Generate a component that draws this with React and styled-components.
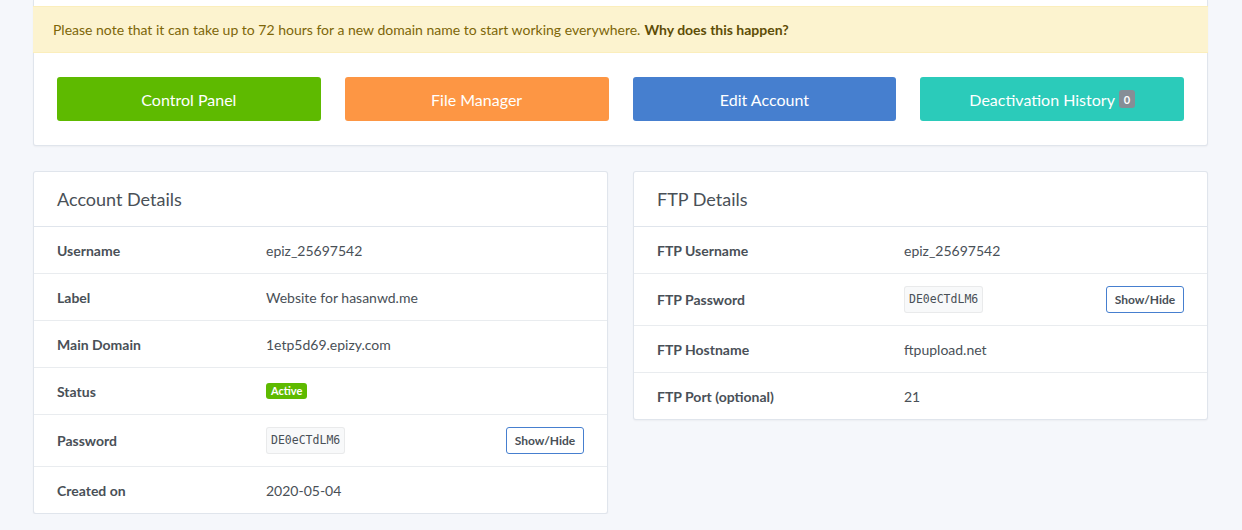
import React from 'react';
import styled, { createGlobalStyle } from 'styled-components';

const GlobalStyle = createGlobalStyle`
  * { box-sizing: border-box; }
  body {
    margin: 0;
    background: #f5f7fb;
    font-family: Lato, "Open Sans", sans-serif;
    font-size: 14px;
    color: #495057;
  }
`;

const Page = styled.div`
  width: 1208px;
  padding-left: 33px;
  display: flex;
  flex-direction: column;
  gap: 25px;
`;

const Card = styled.div`
  background: #fff;
  border: 1px solid rgba(0, 40, 100, 0.12);
  border-radius: 3px;
  box-shadow: 0 1px 2px rgba(0, 0, 0, 0.04);
`;

const TopCard = styled(Card)`
  border-top: none;
  border-radius: 0 0 3px 3px;
`;

const Cutoff = styled.div`
  height: 6px;
`;

const Alert = styled.div`
  background: #fcf3cf;
  border-top: 1px solid #fbeebc;
  border-bottom: 1px solid #fbeebc;
  color: #7d6608;
  padding: 0 20px;
  height: 47px;
  display: flex;
  align-items: center;
  margin: 0 -1px;
  font-size: 14px;
`;

const AlertLink = styled.b`
  color: #5e4d06;
  font-weight: 700;
  margin-left: 4px;
`;

const ButtonRow = styled.div`
  display: grid;
  grid-template-columns: repeat(4, 1fr);
  gap: 24px;
  padding: 24px 23px;
`;

const BigButton = styled.div`
  height: 44px;
  border-radius: 3px;
  background: ${p => p.$bg};
  color: #fff;
  font-size: 16px;
  display: flex;
  align-items: center;
  justify-content: center;
`;

const CountBadge = styled.span`
  background: #868e96;
  color: #fff;
  font-size: 11px;
  font-weight: 700;
  width: 16px;
  height: 18px;
  border-radius: 3px;
  display: inline-flex;
  align-items: center;
  justify-content: center;
  margin-left: 4px;
`;

const Columns = styled.div`
  display: grid;
  grid-template-columns: 1fr 1fr;
  gap: 25px;
  align-items: start;
`;

const CardHeader = styled.div`
  height: 55px;
  padding: 0 23px;
  display: flex;
  align-items: center;
  font-size: 18px;
  font-weight: 400;
  color: #495057;
  border-bottom: 1px solid rgba(0, 40, 100, 0.12);
`;

const Row = styled.div`
  display: grid;
  grid-template-columns: ${p => p.$labelWidth}px 1fr auto;
  align-items: center;
  min-height: 47px;
  padding: 12px 23px;
  border-top: 1px solid #e9ecef;
  &:first-child {
    border-top: none;
    min-height: 46px;
  }
`;

const Label = styled.div`
  font-weight: 700;
`;

const Value = styled.div`
  display: flex;
  align-items: center;
`;

const StatusBadge = styled.span`
  display: inline-block;
  background: #5eba00;
  color: #fff;
  font-size: 11px;
  font-weight: 700;
  padding: 2px 5px;
  border-radius: 3px;
  line-height: 12px;
`;

const Code = styled.span`
  display: inline-block;
  background: #f8f9fa;
  border: 1px solid rgba(0, 0, 0, 0.06);
  border-radius: 3px;
  padding: 0 4px;
  height: 27px;
  line-height: 25px;
  font-family: "DejaVu Sans Mono", "Liberation Mono", monospace;
  font-size: 11.5px;
  color: #495057;
`;

const ToggleButton = styled.button`
  height: 27px;
  width: 78px;
  padding: 0;
  background: #fff;
  border: 1px solid #467fcf;
  border-radius: 3px;
  font-family: inherit;
  font-size: 12px;
  font-weight: 700;
  color: #495057;
`;

const accountRows = [
  { label: 'Username', value: 'epiz_25697542' },
  { label: 'Label', value: 'Website for hasanwd.me' },
  { label: 'Main Domain', value: '1etp5d69.epizy.com' },
  { label: 'Status', badge: 'Active' },
  { label: 'Password', code: 'DE0eCTdLM6' },
  { label: 'Created on', value: '2020-05-04' },
];

const ftpRows = [
  { label: 'FTP Username', value: 'epiz_25697542' },
  { label: 'FTP Password', code: 'DE0eCTdLM6' },
  { label: 'FTP Hostname', value: 'ftpupload.net' },
  { label: 'FTP Port (optional)', value: '21' },
];

function DetailsCard({ title, rows, labelWidth }) {
  return (
    <Card>
      <CardHeader>{title}</CardHeader>
      <div>
        {rows.map(r => (
          <Row key={r.label} $labelWidth={labelWidth}>
            <Label>{r.label}</Label>
            <Value>
              {r.value}
              {r.badge && <StatusBadge>{r.badge}</StatusBadge>}
              {r.code && <Code>{r.code}</Code>}
            </Value>
            {r.code ? <ToggleButton>Show/Hide</ToggleButton> : <span />}
          </Row>
        ))}
      </div>
    </Card>
  );
}

export default function App() {
  return (
    <>
      <GlobalStyle />
      <Page>
        <TopCard>
          <Cutoff />
          <Alert>
            Please note that it can take up to 72 hours for a new domain name to start working everywhere.
            <AlertLink>Why does this happen?</AlertLink>
          </Alert>
          <ButtonRow>
            <BigButton $bg="#5eba00">Control Panel</BigButton>
            <BigButton $bg="#fd9644">File Manager</BigButton>
            <BigButton $bg="#467fcf">Edit Account</BigButton>
            <BigButton $bg="#2bcbba">
              Deactivation History <CountBadge>0</CountBadge>
            </BigButton>
          </ButtonRow>
        </TopCard>
        <Columns>
          <DetailsCard title="Account Details" rows={accountRows} labelWidth={209} />
          <DetailsCard title="FTP Details" rows={ftpRows} labelWidth={247} />
        </Columns>
      </Page>
    </>
  );
}
